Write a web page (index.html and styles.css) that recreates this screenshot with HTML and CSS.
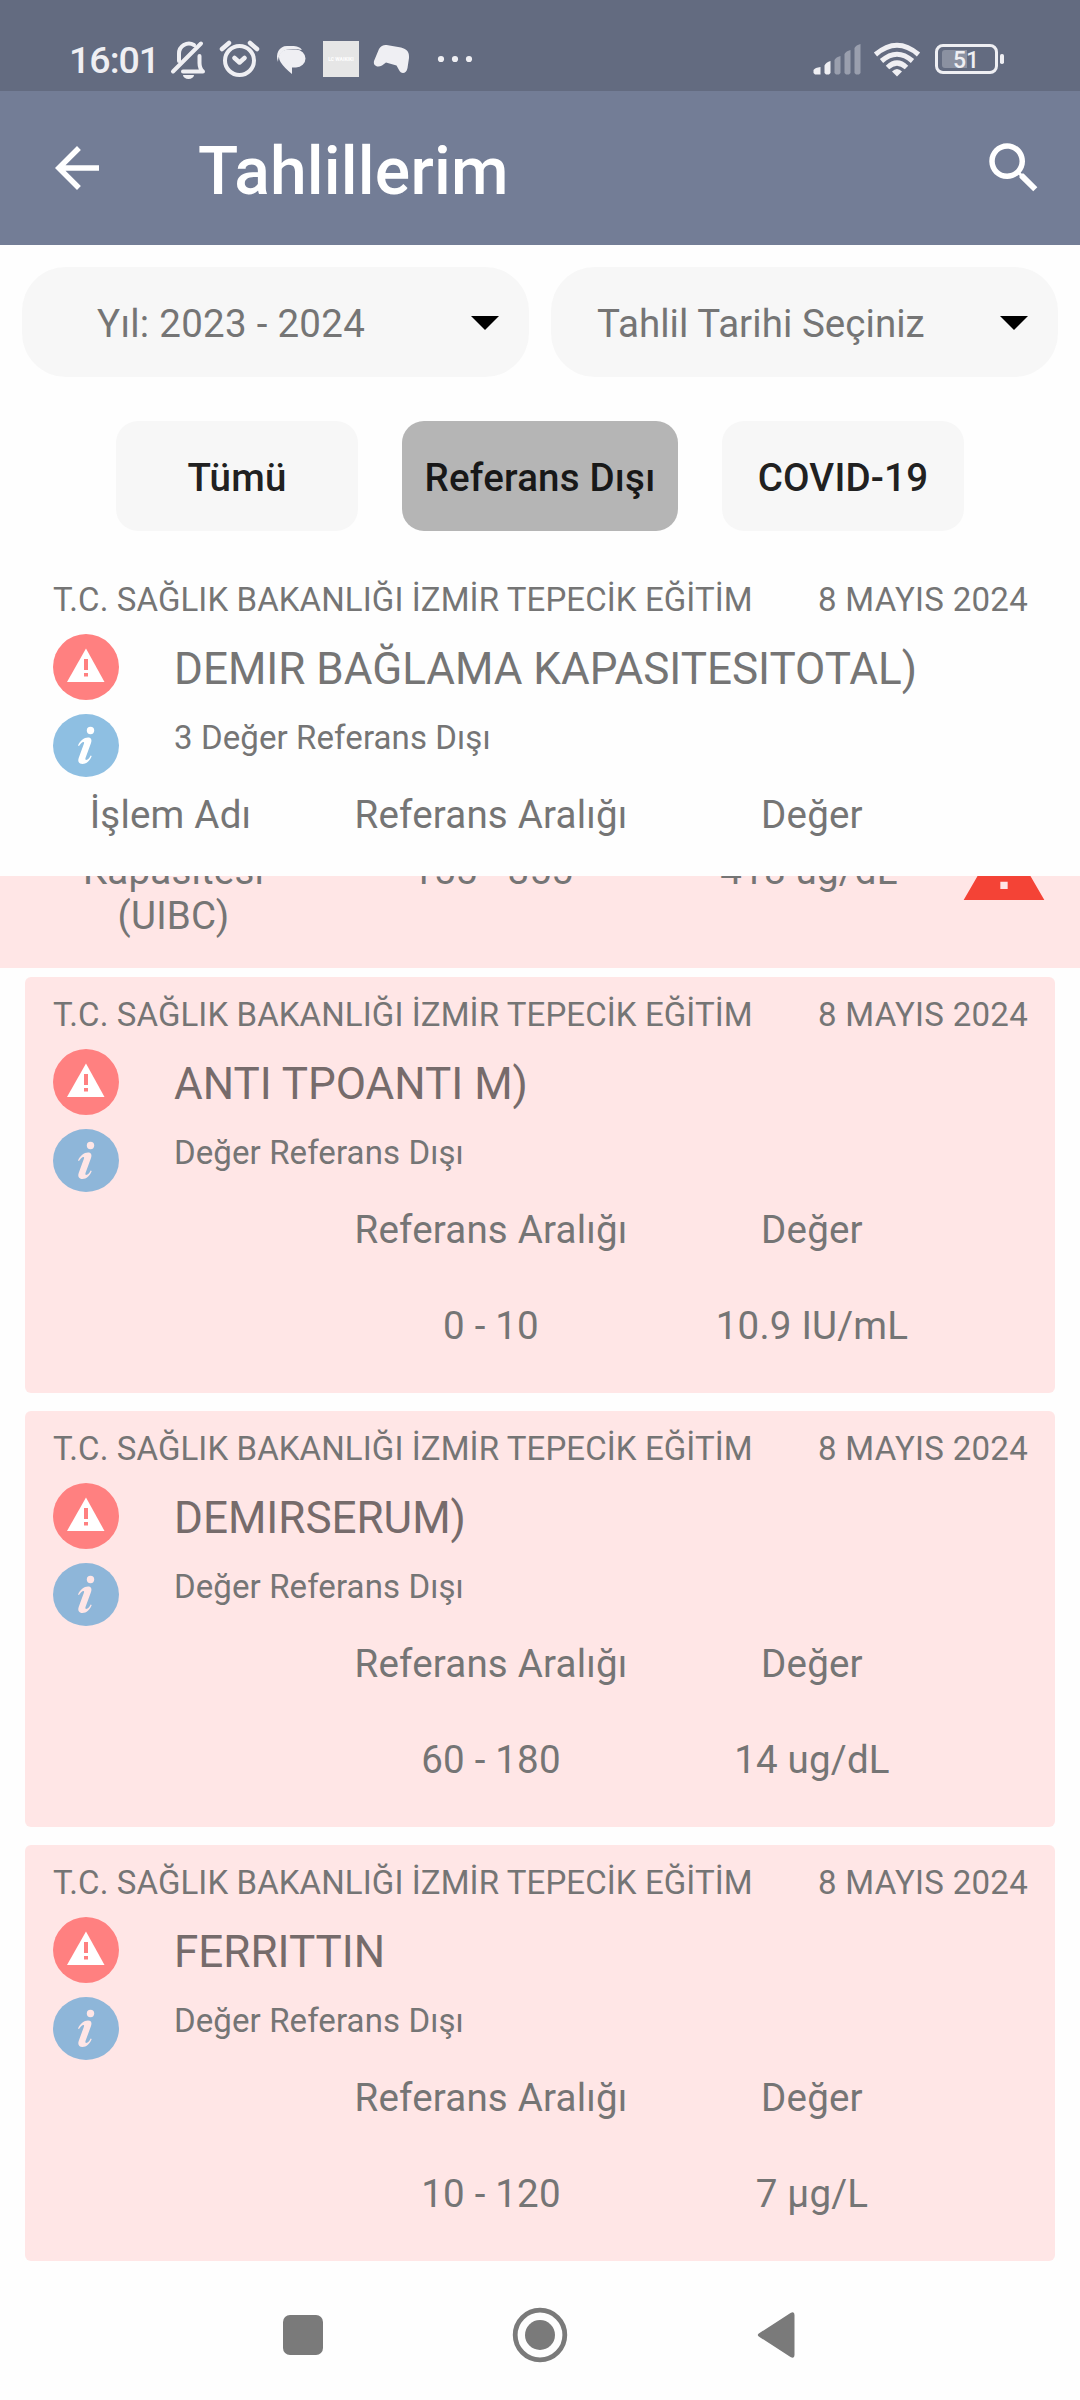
FILE: index.html
```html
<!DOCTYPE html>
<html lang="tr">
<head>
<meta charset="utf-8">
<title>Tahlillerim</title>
<link rel="stylesheet" href="styles.css">
</head>
<body>
<svg width="0" height="0" class="defs">
  <defs>
    <symbol id="warn" viewBox="0 0 66 66">
      <ellipse cx="33" cy="33" rx="33" ry="33" fill="#ff8080"/>
      <path d="M33 14.500 51.500 48H14z" fill="#fff"/>
      <path d="M31 25h4v11h-4zM31 39h4v3.500h-4z" fill="#ff8080"/>
    </symbol>
    <symbol id="info" viewBox="0 0 66 63">
      <ellipse cx="33" cy="31.500" rx="33" ry="31.500" fill="currentColor"/>
      <circle cx="37.500" cy="16.500" r="3.700"/>
      <path d="M25 31.500C27 27 31 23.500 35 23.500 38.500 23.500 39 26 38 29L32.500 44C32 46 33 46.500 34.500 45.500 36 44.500 37 43 37.700 41.500L38.700 42C37 46.500 33.500 50 29.500 50 26 50 24.500 47.500 25.700 44L30.800 30C31.500 28 31 27.500 29.500 28.200 28 29 27 30.500 26 32z"/>
    </symbol>
  </defs>
</svg>

<div class="status">
  <span class="clock">16:01</span>
  <svg class="status-icons" viewBox="160 0 330 91" width="330" height="91" fill="#efeff3">
    <g fill="none" stroke="#efeff3" stroke-width="4" stroke-linecap="round" stroke-linejoin="round">
      <path d="M179 61V54A10 10 0 0 1 194 45M173 71.500 201 43.500M183 71.500H203C200 69 199.500 67 199.500 63V56"/>
      <circle cx="239.500" cy="60.500" r="14.500"/>
      <path d="M234.500 58 239.500 62.500 244.500 58M222 49 229 43M257 49 250 43" stroke-width="4.500"/>
    </g>
    <path d="M183 75h11a5.500 4 0 0 1-11 0z"/>
    <path d="M278 62C275 54 279 46 287 46H292C297 46 300 47 302 50 296 48.500 286 48 282 52 279 55 278 58 278 62z"/>
    <path d="M289 49.500H296A9.500 9 0 0 1 296 67.500H292V74C287 70 283 66 280.500 62 276.500 55 281 49.500 289 49.500z"/>
    <path d="M323 41h36v36h-36z" fill="#e6e6e6"/>
    <path d="M379 49C381 45.500 384 44.500 388 45.200L401 47.500C407 49 409.500 52 409 58L407.500 68C406.500 74 401 74.500 399 70L396.500 65.500 386 62.500 382 65.500C377 68 373 65.500 374 61z"/>
    <circle cx="441" cy="59" r="3.100"/><circle cx="455" cy="59" r="3.100"/><circle cx="469" cy="59" r="3.100"/>
    <text x="341" y="61" class="shop">LC WAIKIKI</text>
  </svg>
  <svg class="system-icons" viewBox="810 0 200 91" width="200" height="91" fill="#efeff3">
    <path d="M813.500 73V70Q815 67.500 820.500 67V74.500H815zM824.500 73V65.500Q826 62 830.500 61V73L829 74.500H826z"/>
    <path fill="#9a9fae" d="M834.500 73V60Q836 57 840.500 56V73L839 74.500H836zM844.500 73V54Q846 51 850.500 50V73L849 74.500H846zM854.500 73V48Q856 45 860.500 44V73L859 74.500H856z"/>
    <g fill="none" stroke="#efeff3" stroke-width="5">
      <path d="M875.500 54.500Q897 36 918.500 54.500M881.500 61Q897 47.500 912.500 61M887.500 67.500Q897 58.500 906.500 67.500"/>
    </g>
    <path d="M897 76.500 892 71.500Q897 66.500 902 71.500z"/>
    <rect x="936.500" y="45.500" width="60" height="27" rx="6.500" fill="none" stroke="#efeff3" stroke-width="3"/>
    <path fill="#8b91a1" d="M945 50H967V68H945Q942 68 942 65V53Q942 50 945 50z"/>
    <rect x="1000" y="54" width="4" height="10" rx="1.800"/>
    <text x="966" y="68" class="percent">51</text>
  </svg>
</div>

<header class="toolbar">
  <svg width="66" height="66" viewBox="0 0 24 24" fill="#fff"><path d="M20 11H7.830l5.590-5.590L12 4l-8 8 8 8 1.410-1.410L7.830 13H20v-2z"/></svg>
  <h1>Tahlillerim</h1>
  <svg class="search" width="66" height="66" viewBox="0 0 24 24" fill="#fff"><path d="M15.500 14h-.79l-.28-.27C15.410 12.590 16 11.110 16 9.500 16 5.910 13.090 3 9.500 3S3 5.910 3 9.500 5.910 16 9.500 16c1.610 0 3.090-.59 4.230-1.570l.27.28v.79l5 4.990L20.490 19l-4.990-5zm-6 0C7.010 14 5 11.990 5 9.500S7.010 5 9.500 5 14 7.010 14 9.500 11.990 14 9.500 14z"/></svg>
</header>

<section class="selects">
  <div class="select year"><span>Yıl: 2023 - 2024</span><svg width="28" height="14" viewBox="0 0 28 14"><path d="M0 0h28L14 14z"/></svg></div>
  <div class="select"><span>Tahlil Tarihi Seçiniz</span><svg width="28" height="14" viewBox="0 0 28 14"><path d="M0 0h28L14 14z"/></svg></div>
</section>

<nav class="filters">
  <button class="filter">Tümü</button>
  <button class="filter active">Referans Dışı</button>
  <button class="filter">COVID-19</button>
</nav>

<main class="results">
  <article class="result sticky">
    <div class="meta"><span>T.C. SAĞLIK BAKANLIĞI İZMİR TEPECİK EĞİTİM</span><span class="date">8 MAYIS 2024</span></div>
    <div class="summary">
      <div class="badges"><svg width="66" height="66"><use href="#warn"/></svg><svg class="info" width="66" height="63"><use href="#info"/></svg></div>
      <div><h2>DEMIR BAĞLAMA KAPASITESITOTAL)</h2><p>3 Değer Referans Dışı</p></div>
    </div>
    <div class="row"><span>İşlem Adı</span><span>Referans Aralığı</span><span>Değer</span></div>
  </article>

  <div class="clipped">
    <div class="row wide"><span>Kapasitesi<br>(UIBC)</span><span>155 - 355</span><span>418 ug/dL</span>
      <svg width="88" height="88" viewBox="0 0 24 24"><path fill="#f44336" d="M1 21h22L12 2 1 21zm12-3h-2v-2h2v2zm0-4h-2v-4h2v4z"/></svg>
    </div>
  </div>

  <article class="result">
    <div class="meta"><span>T.C. SAĞLIK BAKANLIĞI İZMİR TEPECİK EĞİTİM</span><span class="date">8 MAYIS 2024</span></div>
    <div class="summary">
      <div class="badges"><svg width="66" height="66"><use href="#warn"/></svg><svg class="info" width="66" height="63"><use href="#info"/></svg></div>
      <div><h2>ANTI TPOANTI M)</h2><p>Değer Referans Dışı</p></div>
    </div>
    <div class="row"><span></span><span>Referans Aralığı</span><span>Değer</span></div>
    <div class="row values"><span></span><span>0 - 10</span><span>10.9 IU/mL</span></div>
  </article>

  <article class="result">
    <div class="meta"><span>T.C. SAĞLIK BAKANLIĞI İZMİR TEPECİK EĞİTİM</span><span class="date">8 MAYIS 2024</span></div>
    <div class="summary">
      <div class="badges"><svg width="66" height="66"><use href="#warn"/></svg><svg class="info" width="66" height="63"><use href="#info"/></svg></div>
      <div><h2>DEMIRSERUM)</h2><p>Değer Referans Dışı</p></div>
    </div>
    <div class="row"><span></span><span>Referans Aralığı</span><span>Değer</span></div>
    <div class="row values"><span></span><span>60 - 180</span><span>14 ug/dL</span></div>
  </article>

  <article class="result">
    <div class="meta"><span>T.C. SAĞLIK BAKANLIĞI İZMİR TEPECİK EĞİTİM</span><span class="date">8 MAYIS 2024</span></div>
    <div class="summary">
      <div class="badges"><svg width="66" height="66"><use href="#warn"/></svg><svg class="info" width="66" height="63"><use href="#info"/></svg></div>
      <div><h2>FERRITTIN</h2><p>Değer Referans Dışı</p></div>
    </div>
    <div class="row"><span></span><span>Referans Aralığı</span><span>Değer</span></div>
    <div class="row values"><span></span><span>10 - 120</span><span>7 µg/L</span></div>
  </article>
</main>

<footer class="navbar">
  <svg width="56" height="56" viewBox="0 0 56 56"><rect x="8" y="8" width="40" height="40" rx="7"/></svg>
  <svg width="56" height="56" viewBox="0 0 56 56"><circle cx="28" cy="28" r="24.800" fill="none" stroke="#7a7a7a" stroke-width="4.800"/><circle cx="28" cy="28" r="15"/></svg>
  <svg width="56" height="56" viewBox="0 0 56 56"><path d="M10.500 26 41.500 6Q45.500 4 45.500 8V48Q45.500 52 41.500 50L10.500 30Q7 28 10.500 26z"/></svg>
</footer>
</body>
</html>
```
FILE: styles.css
```css
* { box-sizing: border-box; }

body {
  margin: 0;
  width: 1080px;
  height: 2400px;
  overflow: hidden;
  background: #fefefe;
  color: #757575;
  font-family: Roboto, sans-serif;
  font-size: 38.5px;
  letter-spacing: 0.2px;
  display: flex;
  flex-direction: column;
}

svg { display: block; flex: none; }
.defs { position: absolute; }
h1, h2, p { margin: 0; font-weight: 400; }

.status {
  height: 91px;
  flex: none;
  padding: 0 70px 0 69px;
  display: flex;
  background: #636b80;
  color: #efeff3;
}
.clock {
  width: 91px;
  padding-top: 38px;
  font-size: 37.5px;
  line-height: 44px;
  font-weight: 500;
  letter-spacing: -1px;
  white-space: nowrap;
}
.system-icons { margin-left: auto; letter-spacing: 0; }
.shop { font-size: 5px; font-weight: 700; letter-spacing: 0; text-anchor: middle; fill: #fff; }
.percent { font-size: 23px; font-weight: 500; text-anchor: middle; }

.toolbar {
  height: 154px;
  flex: none;
  display: flex;
  align-items: center;
  padding: 0 33px 0 44px;
  background: #737d96;
  color: #fff;
}
.toolbar h1 {
  margin-left: 88px;
  font-size: 66px;
  line-height: 78px;
  font-weight: 500;
  padding-top: 7px;
}
.search { margin-left: auto; }

.selects {
  flex: none;
  display: flex;
  gap: 22px;
  padding: 22px 22px 0;
}
.select {
  width: 507px;
  height: 110px;
  padding: 2px 30px 0 46px;
  display: flex;
  align-items: center;
  justify-content: space-between;
  border-radius: 44px;
  background: #f7f7f7;
  letter-spacing: 0.05px;
}
.year { padding-left: 75px; letter-spacing: 0.27px; }

.filters {
  flex: none;
  display: flex;
  justify-content: center;
  gap: 44px;
  padding-top: 44px;
}
.filter {
  width: 242px;
  height: 110px;
  padding: 3px 0 0;
  border: 0;
  border-radius: 22px;
  background: #f7f7f7;
  color: #212121;
  font: 500 38.5px Roboto, sans-serif;
  letter-spacing: 0.2px;
  white-space: nowrap;
}
.filter.active { width: 276px; background: #b5b5b5; color: #181818; }

.results { flex: none; padding-top: 31px; }
.result {
  height: 416px;
  margin: 0 25px 18px;
  padding: 18px 27px 0 28px;
  border-radius: 6px;
  background: #ffe6e6;
}
.sticky { height: 314px; margin-bottom: 0; background: #fefefe; }
.meta {
  height: 54px;
  display: flex;
  justify-content: space-between;
  font-size: 33px;
  line-height: 39px;
  letter-spacing: 0.1px;
  white-space: nowrap;
}
.date { letter-spacing: 0.28px; }
.summary { height: 158px; display: flex; gap: 55px; }
.badges { display: flex; flex-direction: column; gap: 14px; }
.info { color: #8eb6d9; fill: #ffe6e6; }
.sticky .info { color: #8ebfe2; fill: #fff; }
h2 {
  padding-top: 9px;
  font-size: 44px;
  line-height: 52px;
  letter-spacing: 0;
  color: #766b6b;
  white-space: nowrap;
}
.sticky h2 { color: #757575; }
.summary p { padding-top: 23px; font-size: 33px; line-height: 39px; letter-spacing: 0.1px; }

.row {
  display: grid;
  grid-template-columns: 235px 406px 236px;
  line-height: 45px;
  text-align: center;
}
.values { margin-top: 51px; }

.clipped {
  height: 92px;
  margin-bottom: 9px;
  overflow: hidden;
  background: #ffe6e6;
}
.wide {
  margin-top: -28px;
  padding-left: 52px;
  grid-template-columns: 243px 395px 238px 1fr;
}
.wide svg { margin: -25px 0 0 32px; }

.navbar {
  flex: 1;
  display: flex;
  justify-content: center;
  gap: 181px;
  padding: 28px 1px 0 0;
  fill: #7a7a7a;
}
```
